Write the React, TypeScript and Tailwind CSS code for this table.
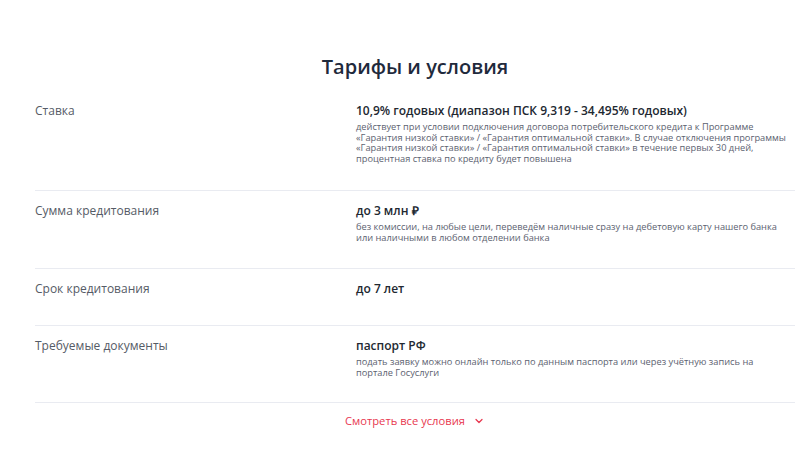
import React from "react";
import { ChevronDown } from "lucide-react";

type Row = {
  label: string;
  value: string;
  note?: string;
  pad: string;
};

const rows: Row[] = [
  {
    label: "Ставка",
    value: "10,9% годовых (диапазон ПСК 9,319 - 34,495% годовых)",
    note:
      "действует при условии подключения договора потребительского кредита к Программе «Гарантия низкой ставки» / «Гарантия оптимальной ставки». В случае отключения программы «Гарантия низкой ставки» / «Гарантия оптимальной ставки» в течение первых 30 дней, процентная ставка по кредиту будет повышена",
    pad: "pb-[26px]",
  },
  {
    label: "Сумма кредитования",
    value: "до 3 млн ₽",
    note:
      "без комиссии, на любые цели, переведём наличные сразу на дебетовую карту нашего банка или наличными в любом отделении банка",
    pad: "pt-3 pb-[25px]",
  },
  {
    label: "Срок кредитования",
    value: "до 7 лет",
    pad: "pt-3 pb-[28px]",
  },
  {
    label: "Требуемые документы",
    value: "паспорт РФ",
    note:
      "подать заявку можно онлайн только по данным паспорта или через учётную запись на портале Госуслуги",
    pad: "pt-3 pb-[24px]",
  },
];

export default function App() {
  return (
    <div className="min-h-[456px] bg-white pl-[35px] pr-[5px] pt-[53px] font-['Open_Sans',sans-serif]">
      <h2 className="text-center text-[20px] font-semibold leading-[28px] text-[#1f2a3c]">
        Тарифы и условия
      </h2>

      <div className="mt-[22px]">
        {rows.map((row) => (
          <div
            key={row.label}
            className={`grid grid-cols-[321px_1fr] border-b border-[#e9ebf1] ${row.pad}`}
          >
            <div className="text-[12px] leading-4 text-[#555b66]">{row.label}</div>
            <div>
              <div className="text-[12px] font-semibold leading-4 text-[#222831]">{row.value}</div>
              {row.note && (
                <p className="mt-[3px] max-w-[434px] text-[9.25px] leading-[10.5px] text-[#5c6270]">
                  {row.note}
                </p>
              )}
            </div>
          </div>
        ))}
      </div>

      <div className="mt-[10px] flex justify-center">
        <button className="flex items-center gap-[8px] text-[11.2px] leading-4 text-[#e8374f]">
          Смотреть все условия
          <ChevronDown size={12} strokeWidth={2.5} />
        </button>
      </div>
    </div>
  );
}
